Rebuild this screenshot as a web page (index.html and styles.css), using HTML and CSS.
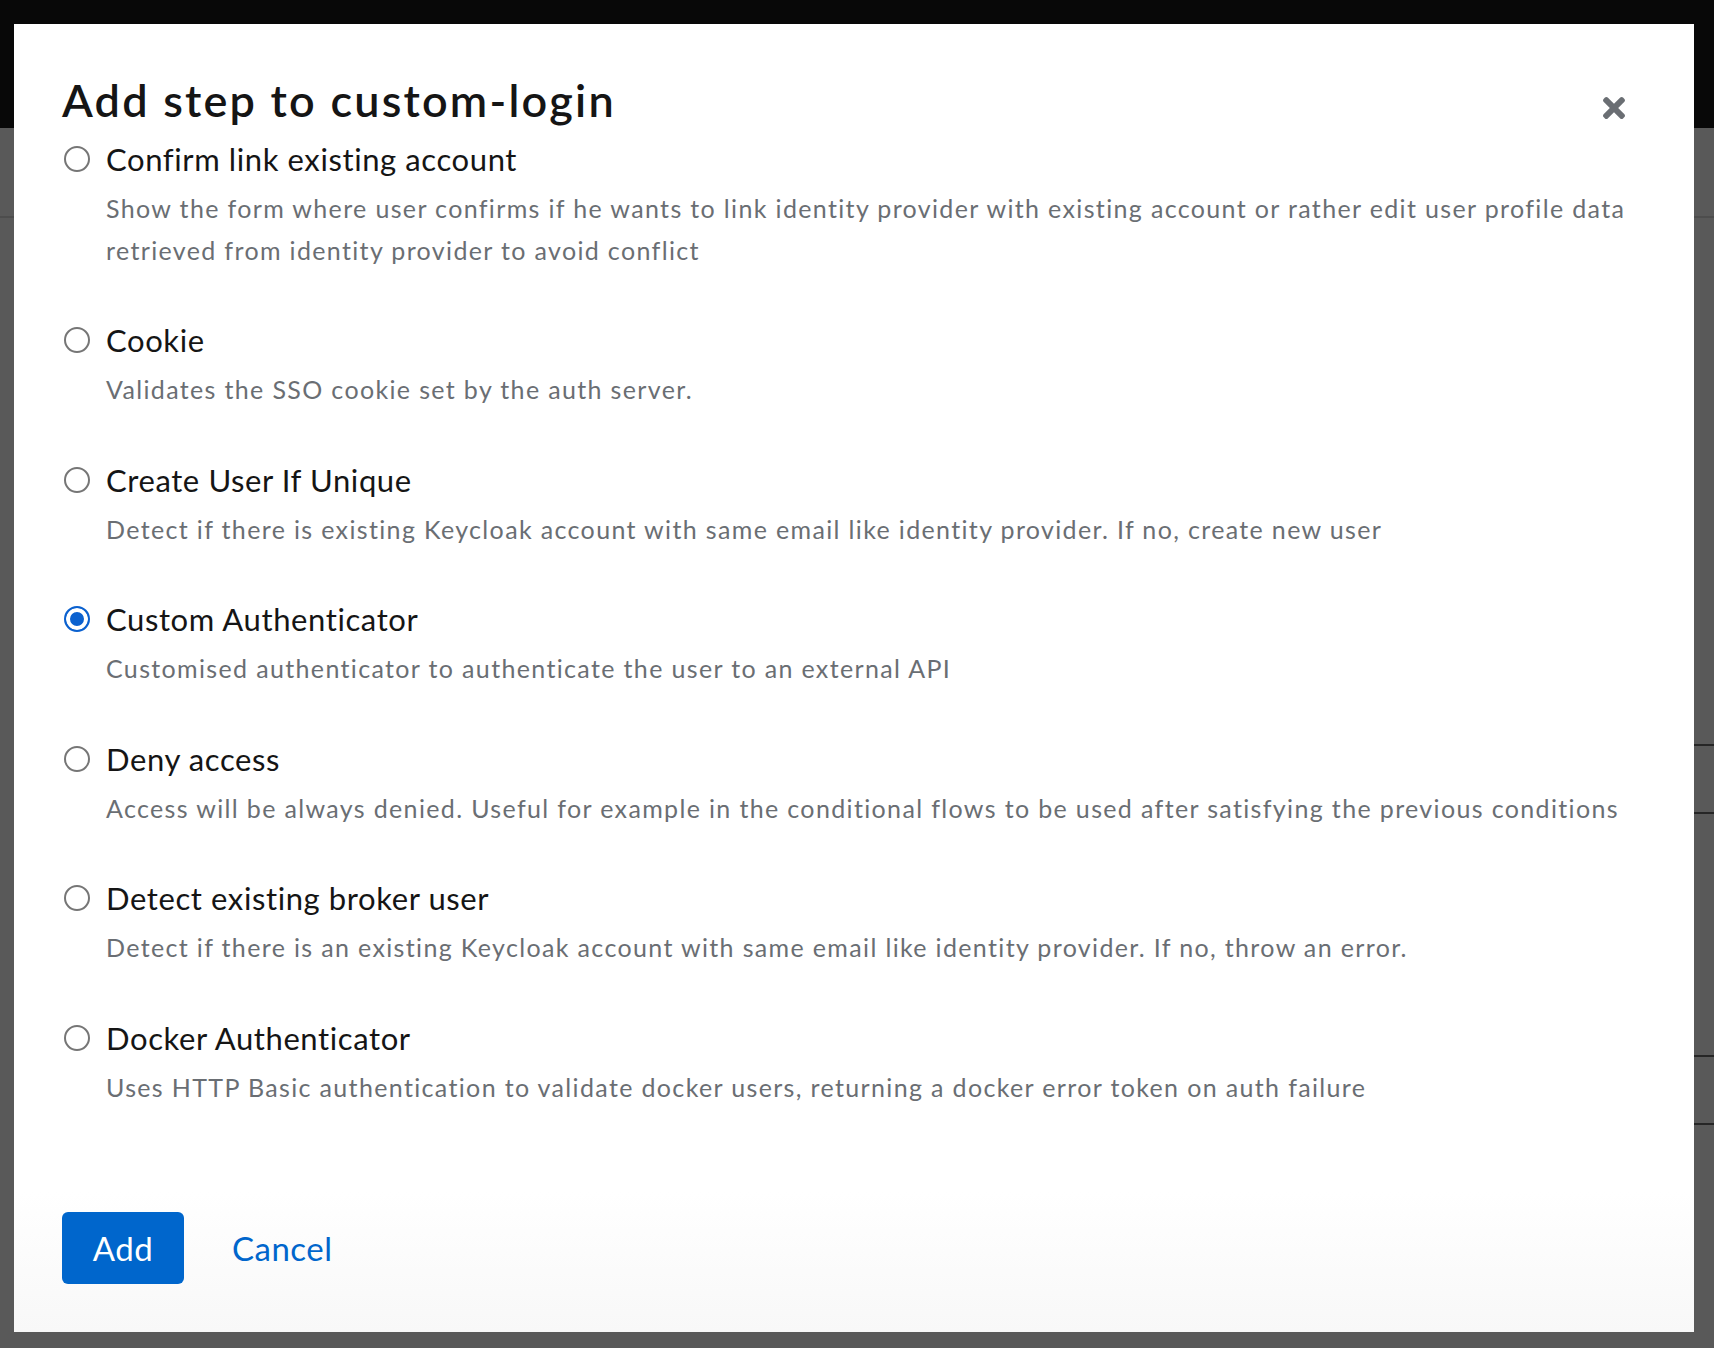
FILE: index.html
```html
<!DOCTYPE html>
<html lang="en">
<head>
<meta charset="utf-8">
<title>Add step to custom-login</title>
<link rel="stylesheet" href="styles.css">
</head>
<body>
<div class="page">
  <header class="masthead"></header>
  <div class="content">
    <div class="toolbar"></div>
    <div class="table">
      <div class="spacer spacer-a"></div>
      <div class="row"></div>
      <div class="spacer spacer-b"></div>
      <div class="row"></div>
    </div>
  </div>
</div>

<div class="backdrop">
  <div class="modal" role="dialog" aria-modal="true" aria-labelledby="modal-title">
    <button class="close" type="button" aria-label="Close">
      <svg viewBox="0 80 352 352" width="22" height="22" aria-hidden="true"><path fill="currentColor" d="M242.72 256l100.07-100.07c12.28-12.28 12.28-32.19 0-44.48l-22.24-22.240c-12.28-12.28-32.19-12.28-44.48 0L176 189.28 75.93 89.21c-12.28-12.28-32.19-12.28-44.48 0L9.21 111.45c-12.28 12.28-12.28 32.19 0 44.48L109.28 256 9.21 356.07c-12.28 12.28-12.28 32.19 0 44.48l22.24 22.24c12.28 12.28 32.2 12.28 44.48 0L176 322.72l100.07 100.07c12.28 12.28 32.2 12.28 44.48 0l22.24-22.24c12.28-12.28 12.28-32.19 0-44.48L242.72 256z"/></svg>
    </button>
    <h1 class="title" id="modal-title">Add step to custom-login</h1>
    <div class="options">
      <label class="option">
        <input class="radio" type="radio" name="step">
        <span class="label">Confirm link existing account</span>
        <span class="desc">Show the form where user confirms if he wants to link identity provider with existing account or rather edit user profile data retrieved from identity provider to avoid conflict</span>
      </label>
      <label class="option">
        <input class="radio" type="radio" name="step">
        <span class="label">Cookie</span>
        <span class="desc">Validates the SSO cookie set by the auth server.</span>
      </label>
      <label class="option">
        <input class="radio" type="radio" name="step">
        <span class="label">Create User If Unique</span>
        <span class="desc">Detect if there is existing Keycloak account with same email like identity provider. If no, create new user</span>
      </label>
      <label class="option">
        <input class="radio" type="radio" name="step" checked>
        <span class="label">Custom Authenticator</span>
        <span class="desc">Customised authenticator to authenticate the user to an external API</span>
      </label>
      <label class="option">
        <input class="radio" type="radio" name="step">
        <span class="label">Deny access</span>
        <span class="desc">Access will be always denied. Useful for example in the conditional flows to be used after satisfying the previous conditions</span>
      </label>
      <label class="option">
        <input class="radio" type="radio" name="step">
        <span class="label">Detect existing broker user</span>
        <span class="desc">Detect if there is an existing Keycloak account with same email like identity provider. If no, throw an error.</span>
      </label>
      <label class="option">
        <input class="radio" type="radio" name="step">
        <span class="label">Docker Authenticator</span>
        <span class="desc">Uses HTTP Basic authentication to validate docker users, returning a docker error token on auth failure</span>
      </label>
    </div>
    <footer class="footer">
      <button class="btn btn-primary" type="button">Add</button>
      <button class="btn btn-link" type="button">Cancel</button>
    </footer>
  </div>
</div>
</body>
</html>
```

FILE: styles.css
```css
* { box-sizing: border-box; }

html, body {
  margin: 0;
  padding: 0;
  width: 1714px;
  height: 1348px;
  overflow: hidden;
}

body {
  font-family: Lato, "Liberation Sans", sans-serif;
  background: #595959;
  position: relative;
}

.page {
  display: flex;
  flex-direction: column;
  height: 100%;
}

.masthead {
  height: 128px;
  background: #080808;
}

.content {
  flex: 1;
  background: #595959;
}

.toolbar {
  height: 90px;
  border-bottom: 2px solid #4d4d4d;
}

.table {
  display: flex;
  flex-direction: column;
  margin-left: 1600px;
}

.spacer-a { height: 526px; }
.spacer-b { height: 241px; }

.row {
  height: 70px;
  border-top: 2px solid #262626;
  border-bottom: 2px solid #262626;
}

/* modal */
.backdrop {
  position: absolute;
  inset: 0;
}

.modal {
  position: absolute;
  left: 14px;
  top: 24px;
  width: 1680px;
  height: 1308px;
  padding: 48px;
  background: linear-gradient(to bottom, #ffffff calc(100% - 140px), #f8f8f8);
  display: flex;
  flex-direction: column;
}

.close {
  position: absolute;
  top: 73px;
  right: 69px;
  width: 22px;
  height: 22px;
  padding: 0;
  border: 0;
  background: none;
  color: #6a6e73;
  display: flex;
}

.title {
  margin: 0 0 6.5px;
  font-family: Lato, "Liberation Sans", sans-serif;
  font-weight: 600;
  font-size: 45px;
  line-height: 56px;
  color: #151515;
  letter-spacing: 2.2px;
}

.options {
  display: flex;
  flex-direction: column;
  gap: 45.5px;
}

.option {
  display: grid;
  grid-template-columns: 26px 1fr;
  column-gap: 16px;
  padding-left: 2px;
}

.radio {
  appearance: none;
  -webkit-appearance: none;
  margin: 11px 0 0;
  width: 26px;
  height: 26px;
  border: 2px solid #767676;
  border-radius: 50%;
  background: #fff;
}

.radio:checked {
  border-color: #0b61cf;
  background: #0b61cf;
  box-shadow: inset 0 0 0 4px #fff;
}

.label {
  grid-column: 2;
  font-size: 31px;
  line-height: 48px;
  color: #151515;
  letter-spacing: 0.6px;
}

.desc {
  grid-column: 2;
  margin-top: 4px;
  font-size: 25px;
  line-height: 42px;
  color: #6a6e73;
  letter-spacing: 1.35px;
}

.footer {
  margin-top: 104.5px;
  display: flex;
  gap: 16px;
}

.btn {
  height: 72px;
  border: 0;
  border-radius: 6px;
  padding: 0 32px;
  font-family: Lato, "Liberation Sans", sans-serif;
  font-size: 33px;
  letter-spacing: 0.5px;
}

.btn-primary {
  background: #0066cc;
  color: #fff;
  width: 122px;
  padding: 0;
}

.btn-link {
  background: none;
  color: #0066cc;
}
```
